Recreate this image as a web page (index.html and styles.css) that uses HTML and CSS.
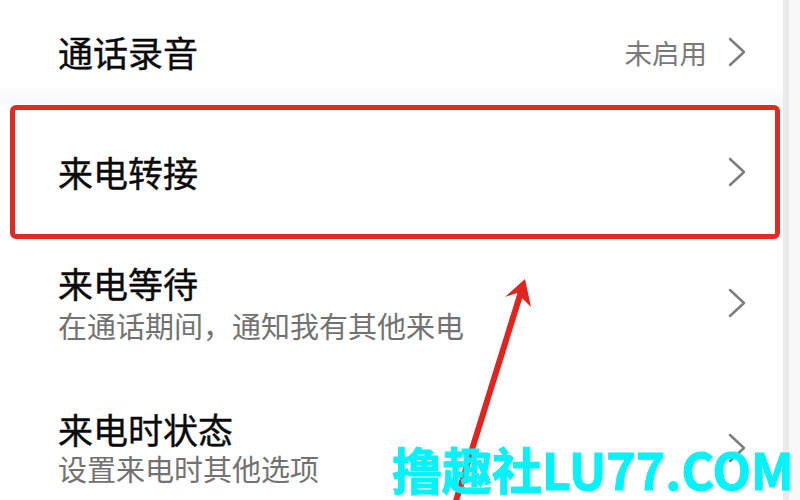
FILE: index.html
```html
<!DOCTYPE html>
<html lang="zh">
<head>
<meta charset="utf-8">
<link rel="stylesheet" href="styles.css">
</head>
<body>
<div class="page">
  <div class="screen">
    <div class="row row-top">
      <div class="texts"><div class="title">通话录音</div></div>
      <div class="right">
        <span class="value">未启用</span>
        <svg class="chev" viewBox="0 0 18 30"><polyline points="2,2 16,15 2,28"/></svg>
      </div>
    </div>
    <div class="row row-hl">
      <div class="texts"><div class="title">来电转接</div></div>
      <div class="right">
        <svg class="chev" viewBox="0 0 18 30"><polyline points="2,2 16,15 2,28"/></svg>
      </div>
    </div>
    <div class="row row-sub">
      <div class="texts">
        <div class="title">来电等待</div>
        <div class="sub">在通话期间，通知我有其他来电</div>
      </div>
      <div class="right">
        <svg class="chev" viewBox="0 0 18 30"><polyline points="2,2 16,15 2,28"/></svg>
      </div>
    </div>
    <div class="row row-sub row-last">
      <div class="texts">
        <div class="title">来电时状态</div>
        <div class="sub">设置来电时其他选项</div>
      </div>
      <div class="right">
        <svg class="chev" viewBox="0 0 18 30"><polyline points="2,2 16,15 2,28"/></svg>
      </div>
    </div>
  </div>
  <div class="edge"></div>

  <svg class="arrow" viewBox="0 0 800 500" width="800" height="500">
    <line x1="455" y1="504" x2="521" y2="292"/>
    <polygon points="525,279 505,297 517,293 531,307"/>
  </svg>
  <div class="mark">撸趣社LU77.COM</div>
</div>
</body>
</html>
```

FILE: styles.css
```css
html, body {
  margin: 0;
  padding: 0;
  background: #ffffff;
}
.page {
  position: relative;
  width: 800px;
  height: 500px;
  overflow: hidden;
  display: flex;
  font-family: "Noto Sans CJK SC", "Noto Sans", sans-serif;
}
.screen {
  width: 783px;
  display: flex;
  flex-direction: column;
  background: #ffffff;
}
.edge {
  width: 17px;
  box-sizing: border-box;
  border-left: 6px solid #e9eaeb;
  background: #f8f8f8;
}
.row {
  display: flex;
  flex-shrink: 0;
  align-items: center;
  justify-content: space-between;
  padding: 0 37px 0 58px;
  box-sizing: border-box;
  position: relative;
}
.row-top {
  height: 104px;
  background: linear-gradient(#ffffff 82%, #f5f7f8);
}
.row-hl {
  height: 136px;
}
.row-hl::after {
  content: "";
  position: absolute;
  left: 10px;
  right: 3px;
  top: 1px;
  bottom: 1px;
  border: 5px solid #e22a24;
  border-radius: 6px;
}
.row-sub {
  height: 145px;
  padding-top: 23px;
  padding-bottom: 42px;
}
.row-last {
  padding-top: 22px;
}
.texts {
  display: flex;
  flex-direction: column;
  gap: 4px;
}
.row-last .texts {
  gap: 1px;
}
.title {
  font-size: 35px;
  line-height: 40px;
  font-weight: 400;
  color: #0a0a0a;
  -webkit-text-stroke: 0.4px #0a0a0a;
}
.sub {
  font-size: 29px;
  line-height: 36px;
  color: #727272;
}
.right {
  display: flex;
  align-items: center;
  gap: 21px;
}
.value {
  font-size: 27.5px;
  color: #7a7a7a;
}
.chev {
  width: 18px;
  height: 30px;
  fill: none;
  stroke: #7d7d7d;
  stroke-width: 2.4;
  stroke-linecap: round;
  stroke-linejoin: round;
}
.arrow {
  position: absolute;
  left: 0;
  top: 0;
}
.arrow line {
  stroke: #e3231d;
  stroke-width: 6;
}
.arrow polygon {
  fill: #e3231d;
}
.mark {
  position: absolute;
  left: 392px;
  top: 440px;
  font-size: 50px;
  line-height: 56px;
  font-weight: 700;
  color: #06f2fb;
  -webkit-text-stroke: 1px #06f2fb;
  white-space: nowrap;
}
```
